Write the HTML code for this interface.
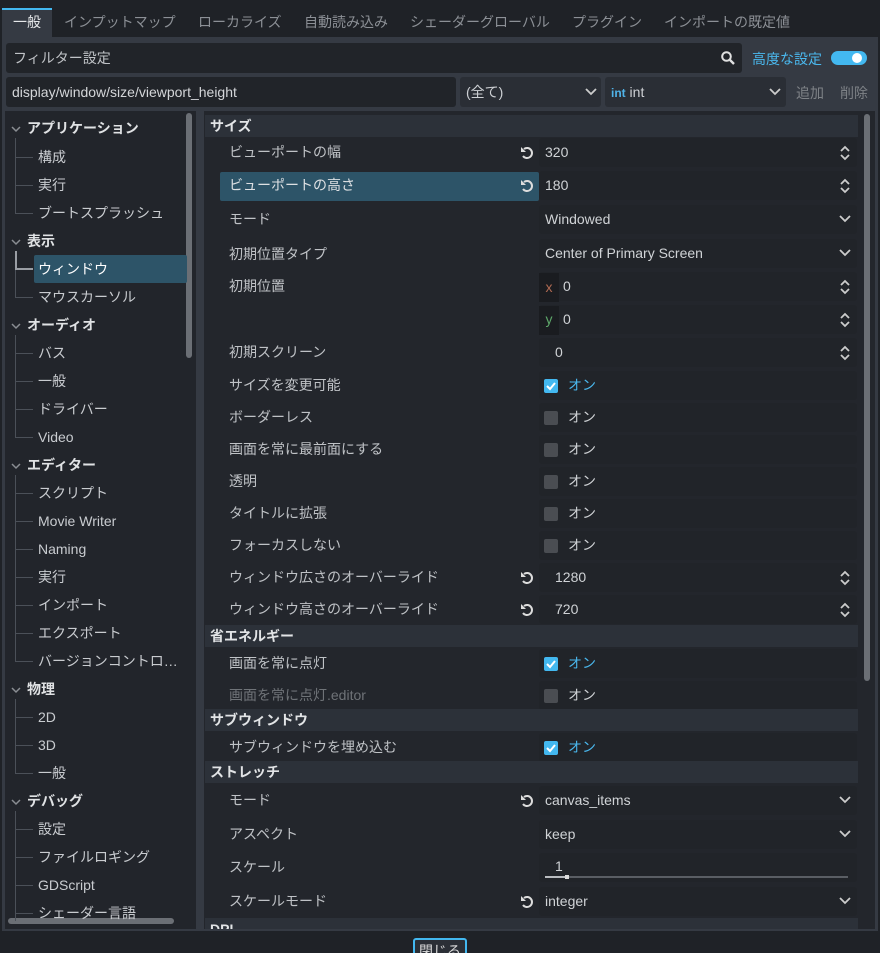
<!DOCTYPE html>
<html style="width:880px;height:953px;overflow:hidden"><head><meta charset="utf-8"><style>
*{margin:0;padding:0;box-sizing:border-box}
body{width:880px;height:953px;background:#1f2227;font-family:"Liberation Sans","Noto Sans CJK JP",sans-serif;font-size:14px;color:#cdd0d4;position:relative;overflow:hidden}
.a{position:absolute;white-space:nowrap}
.tab{position:absolute;top:10px;height:27px;line-height:25px;color:#8c9096;font-size:14px}
.f{position:absolute;background:#212429;border-radius:3px}
.lbl{position:absolute;left:229px;color:#bfc2c6;font-size:14px;line-height:20px}
.val{position:absolute;left:539px;width:318px;height:29px;background:#212429;border-radius:3px;line-height:29px;padding-left:6px;color:#d0d3d6}
.hdr{position:absolute;left:205px;width:653px;height:22px;background:#2c3139;font-weight:bold;padding-left:5px;line-height:22px;color:#e2e4e6;font-size:14px}
.ud{position:absolute;right:6px;top:7px}
.dd{position:absolute;right:6px;top:9px}
.cb{position:absolute;left:5px;top:8px;width:14px;height:14px;border-radius:2px;background:#4a4d52}
.cb.on{background:#43b8f0}
.on-t{position:absolute;left:29px;line-height:29px}
.tr{position:absolute;left:38px;font-size:14px;line-height:20px;color:#c9ccd0}
.th{position:absolute;left:27px;font-weight:bold;line-height:20px;color:#e0e2e4}
.car{position:absolute;left:11px}
.ln{position:absolute;left:15px;width:1px;background:#4b5058}
.hl{position:absolute;left:15px;width:18px;height:1px;background:#4b5058}
.rs{position:absolute;left:519px}
</style></head><body>
<div class="a" style="left:2px;top:8px;width:50px;height:29px;background:#353a43;border-top:2px solid #43b8f0"></div>
<div class="tab" style="left:13px;color:#e6e8ea">一般</div>
<div class="tab" style="left:64px">インプットマップ</div>
<div class="tab" style="left:198px">ローカライズ</div>
<div class="tab" style="left:304px">自動読み込み</div>
<div class="tab" style="left:410px">シェーダーグローバル</div>
<div class="tab" style="left:572px">プラグイン</div>
<div class="tab" style="left:664px">インポートの既定値</div>
<div class="a" style="left:2px;top:37px;width:876px;height:894px;background:#353a43"></div>
<div class="f" style="left:6px;top:43px;width:736px;height:30px;line-height:30px;padding-left:7px;color:#c0c3c7">フィルター設定</div>
<svg class="a" style="left:720px;top:50px" width="16" height="16"><circle cx="6.5" cy="6.5" r="4.3" fill="none" stroke="#e0e0e0" stroke-width="2"/><path d="M10 10l4 4" stroke="#e0e0e0" stroke-width="2.4"/></svg>
<div class="a" style="left:752px;top:49px;color:#4ab8ee;font-size:14px">高度な設定</div>
<div class="a" style="left:831px;top:51px;width:36px;height:14px;border-radius:7px;background:#43b8f0"></div>
<div class="a" style="left:852px;top:53px;width:10px;height:10px;border-radius:5px;background:#fff"></div>
<div class="f" style="left:6px;top:77px;width:450px;height:30px;line-height:30px;padding-left:6px;color:#d4d6d9">display/window/size/viewport_height</div>
<div class="f" style="left:460px;top:77px;width:141px;height:30px;line-height:30px;padding-left:6px;background:#2a2e35">(全て)</div>
<svg class="a" style="left:585px;top:87px" width="12" height="10"><path d="M1 2l5 5 5-5" fill="none" stroke="#ccc" stroke-width="1.8"/></svg>
<div class="f" style="left:605px;top:77px;width:181px;height:30px;line-height:30px;padding-left:6px;background:#2a2e35"><span style="color:#4fb3e8;font-weight:bold;font-size:12px">int</span> int</div>
<svg class="a" style="left:769px;top:87px" width="12" height="10"><path d="M1 2l5 5 5-5" fill="none" stroke="#ccc" stroke-width="1.8"/></svg>
<div class="a" style="left:796px;top:83px;color:#7e8287">追加</div>
<div class="a" style="left:840px;top:83px;color:#7e8287">削除</div>
<div class="a" style="left:5px;top:111px;width:191px;height:818px;background:#22252b"></div>
<div class="a" style="left:186px;top:113px;width:6px;height:245px;border-radius:3px;background:#6b6f75"></div>
<div class="a" style="left:8px;top:918px;width:166px;height:6px;border-radius:3px;background:#6b6f75"></div>
<div class="a" style="left:34px;top:255px;width:153px;height:28px;background:#2d5468;border-radius:2px"></div>
<svg class="car" style="top:125px" width="10" height="8"><path d="M1 2l4 4 4-4" fill="none" stroke="#8a8e93" stroke-width="1.5"/></svg><div class="th" style="top:118px">アプリケーション</div>
<div class="ln" style="top:138px;height:76px"></div>
<div class="hl" style="top:157px"></div><div class="tr" style="top:147px">構成</div>
<div class="hl" style="top:185px"></div><div class="tr" style="top:175px">実行</div>
<div class="hl" style="top:213px"></div><div class="tr" style="top:203px">ブートスプラッシュ</div>
<svg class="car" style="top:238px" width="10" height="8"><path d="M1 2l4 4 4-4" fill="none" stroke="#8a8e93" stroke-width="1.5"/></svg><div class="th" style="top:231px">表示</div>
<div class="ln" style="top:251px;height:47px"></div>
<div class="a" style="left:15px;top:251px;width:2px;height:18px;background:#9a9ea4"></div>
<div class="a" style="left:15px;top:268px;width:18px;height:2px;background:#9a9ea4"></div>
<div class="tr" style="top:259px;color:#fff">ウィンドウ</div>
<div class="hl" style="top:297px"></div><div class="tr" style="top:287px">マウスカーソル</div>
<svg class="car" style="top:322px" width="10" height="8"><path d="M1 2l4 4 4-4" fill="none" stroke="#8a8e93" stroke-width="1.5"/></svg><div class="th" style="top:315px">オーディオ</div>
<div class="ln" style="top:335px;height:103px"></div>
<div class="hl" style="top:353px"></div><div class="tr" style="top:343px">バス</div>
<div class="hl" style="top:381px"></div><div class="tr" style="top:371px">一般</div>
<div class="hl" style="top:409px"></div><div class="tr" style="top:399px">ドライバー</div>
<div class="hl" style="top:437px"></div><div class="tr" style="top:427px">Video</div>
<svg class="car" style="top:462px" width="10" height="8"><path d="M1 2l4 4 4-4" fill="none" stroke="#8a8e93" stroke-width="1.5"/></svg><div class="th" style="top:455px">エディター</div>
<div class="ln" style="top:475px;height:187px"></div>
<div class="hl" style="top:493px"></div><div class="tr" style="top:483px">スクリプト</div>
<div class="hl" style="top:521px"></div><div class="tr" style="top:511px">Movie Writer</div>
<div class="hl" style="top:549px"></div><div class="tr" style="top:539px">Naming</div>
<div class="hl" style="top:577px"></div><div class="tr" style="top:567px">実行</div>
<div class="hl" style="top:605px"></div><div class="tr" style="top:595px">インポート</div>
<div class="hl" style="top:633px"></div><div class="tr" style="top:623px">エクスポート</div>
<div class="hl" style="top:661px"></div><div class="tr" style="top:651px">バージョンコントロ…</div>
<svg class="car" style="top:686px" width="10" height="8"><path d="M1 2l4 4 4-4" fill="none" stroke="#8a8e93" stroke-width="1.5"/></svg><div class="th" style="top:679px">物理</div>
<div class="ln" style="top:699px;height:75px"></div>
<div class="hl" style="top:717px"></div><div class="tr" style="top:707px">2D</div>
<div class="hl" style="top:745px"></div><div class="tr" style="top:735px">3D</div>
<div class="hl" style="top:773px"></div><div class="tr" style="top:763px">一般</div>
<svg class="car" style="top:798px" width="10" height="8"><path d="M1 2l4 4 4-4" fill="none" stroke="#8a8e93" stroke-width="1.5"/></svg><div class="th" style="top:791px">デバッグ</div>
<div class="ln" style="top:811px;height:110px"></div>
<div class="hl" style="top:829px"></div><div class="tr" style="top:819px">設定</div>
<div class="hl" style="top:857px"></div><div class="tr" style="top:847px">ファイルロギング</div>
<div class="hl" style="top:885px"></div><div class="tr" style="top:875px">GDScript</div>
<div class="hl" style="top:913px"></div><div class="tr" style="top:903px">シェーダー言語</div>
<div class="a" style="left:204px;top:111px;width:671px;height:818px;background:#23262c"></div>
<div class="a" style="left:864px;top:114px;width:6px;height:567px;border-radius:3px;background:#6b6f75"></div>
<div class="a" style="left:220px;top:172px;width:319px;height:29px;background:#2d5468;border-radius:2px"></div>

<div class="hdr" style="top:115px">サイズ</div>
<div class="lbl" style="top:142px">ビューポートの幅</div>
<svg class="a rs" style="top:145px" width="16" height="16"><path d="M5 4a5 5 0 1 1-1 7" fill="none" stroke="#ddd" stroke-width="2"/><path d="M2 2v5h5z" fill="#ddd"/></svg>
<div class="val" style="top:138px">320<svg class="ud" width="12" height="16"><path d="M2 6l4-4 4 4M2 10l4 4 4-4" fill="none" stroke="#ccc" stroke-width="1.8"/></svg></div>
<div class="lbl" style="top:175px;color:#dde0e3">ビューポートの高さ</div>
<svg class="a rs" style="top:178px" width="16" height="16"><path d="M5 4a5 5 0 1 1-1 7" fill="none" stroke="#ddd" stroke-width="2"/><path d="M2 2v5h5z" fill="#ddd"/></svg>
<div class="val" style="top:171px">180<svg class="ud" width="12" height="16"><path d="M2 6l4-4 4 4M2 10l4 4 4-4" fill="none" stroke="#ccc" stroke-width="1.8"/></svg></div>
<div class="lbl" style="top:209px">モード</div>
<div class="val" style="top:205px">Windowed<svg class="dd" width="12" height="10"><path d="M1 2l5 5 5-5" fill="none" stroke="#ccc" stroke-width="1.8"/></svg></div>
<div class="lbl" style="top:244px">初期位置タイプ</div>
<div class="val" style="top:239px">Center of Primary Screen<svg class="dd" width="12" height="10"><path d="M1 2l5 5 5-5" fill="none" stroke="#ccc" stroke-width="1.8"/></svg></div>
<div class="lbl" style="top:276px">初期位置</div>
<div class="val" style="top:272px;padding-left:24px">0<svg class="ud" width="12" height="16"><path d="M2 6l4-4 4 4M2 10l4 4 4-4" fill="none" stroke="#ccc" stroke-width="1.8"/></svg></div>
<div class="a" style="left:539px;top:273px;width:20px;height:29px;background:#1a1c20;color:#b06a52;text-align:center;line-height:28px">x</div>
<div class="val" style="top:305px;padding-left:24px">0<svg class="ud" width="12" height="16"><path d="M2 6l4-4 4 4M2 10l4 4 4-4" fill="none" stroke="#ccc" stroke-width="1.8"/></svg></div>
<div class="a" style="left:539px;top:306px;width:20px;height:29px;background:#1a1c20;color:#5ea86a;text-align:center;line-height:26px">y</div>
<div class="lbl" style="top:342px">初期スクリーン</div>
<div class="val" style="top:338px;padding-left:16px">0<svg class="ud" width="12" height="16"><path d="M2 6l4-4 4 4M2 10l4 4 4-4" fill="none" stroke="#ccc" stroke-width="1.8"/></svg></div>

<div class="lbl" style="top:375px">サイズを変更可能</div>
<div class="val" style="top:371px"><div class="cb on"></div><svg class="a" style="left:7px;top:10px" width="10" height="10"><path d="M1 5l3 3 5-6" fill="none" stroke="#fff" stroke-width="2"/></svg><span class="on-t" style="color:#4ab8ee">オン</span></div>
<div class="lbl" style="top:407px">ボーダーレス</div>
<div class="val" style="top:403px"><div class="cb"></div><span class="on-t">オン</span></div>
<div class="lbl" style="top:439px">画面を常に最前面にする</div>
<div class="val" style="top:435px"><div class="cb"></div><span class="on-t">オン</span></div>
<div class="lbl" style="top:471px">透明</div>
<div class="val" style="top:467px"><div class="cb"></div><span class="on-t">オン</span></div>
<div class="lbl" style="top:503px">タイトルに拡張</div>
<div class="val" style="top:499px"><div class="cb"></div><span class="on-t">オン</span></div>
<div class="lbl" style="top:535px">フォーカスしない</div>
<div class="val" style="top:531px"><div class="cb"></div><span class="on-t">オン</span></div>
<div class="lbl" style="top:567px">ウィンドウ広さのオーバーライド</div>
<svg class="a rs" style="top:570px" width="16" height="16"><path d="M5 4a5 5 0 1 1-1 7" fill="none" stroke="#ddd" stroke-width="2"/><path d="M2 2v5h5z" fill="#ddd"/></svg>
<div class="val" style="top:563px;padding-left:16px">1280<svg class="ud" width="12" height="16"><path d="M2 6l4-4 4 4M2 10l4 4 4-4" fill="none" stroke="#ccc" stroke-width="1.8"/></svg></div>
<div class="lbl" style="top:599px">ウィンドウ高さのオーバーライド</div>
<svg class="a rs" style="top:602px" width="16" height="16"><path d="M5 4a5 5 0 1 1-1 7" fill="none" stroke="#ddd" stroke-width="2"/><path d="M2 2v5h5z" fill="#ddd"/></svg>
<div class="val" style="top:595px;padding-left:16px">720<svg class="ud" width="12" height="16"><path d="M2 6l4-4 4 4M2 10l4 4 4-4" fill="none" stroke="#ccc" stroke-width="1.8"/></svg></div>

<div class="hdr" style="top:625px">省エネルギー</div>
<div class="lbl" style="top:653px">画面を常に点灯</div>
<div class="val" style="top:649px"><div class="cb on"></div><svg class="a" style="left:7px;top:10px" width="10" height="10"><path d="M1 5l3 3 5-6" fill="none" stroke="#fff" stroke-width="2"/></svg><span class="on-t" style="color:#4ab8ee">オン</span></div>
<div class="lbl" style="top:685px;color:#6f7378">画面を常に点灯.editor</div>
<div class="val" style="top:681px"><div class="cb"></div><span class="on-t">オン</span></div>
<div class="hdr" style="top:709px">サブウィンドウ</div>
<div class="lbl" style="top:737px">サブウィンドウを埋め込む</div>
<div class="val" style="top:733px"><div class="cb on"></div><svg class="a" style="left:7px;top:10px" width="10" height="10"><path d="M1 5l3 3 5-6" fill="none" stroke="#fff" stroke-width="2"/></svg><span class="on-t" style="color:#4ab8ee">オン</span></div>
<div class="hdr" style="top:761px">ストレッチ</div>
<div class="lbl" style="top:790px">モード</div>
<svg class="a rs" style="top:793px" width="16" height="16"><path d="M5 4a5 5 0 1 1-1 7" fill="none" stroke="#ddd" stroke-width="2"/><path d="M2 2v5h5z" fill="#ddd"/></svg>
<div class="val" style="top:786px">canvas_items<svg class="dd" width="12" height="10"><path d="M1 2l5 5 5-5" fill="none" stroke="#ccc" stroke-width="1.8"/></svg></div>
<div class="lbl" style="top:824px">アスペクト</div>
<div class="val" style="top:820px">keep<svg class="dd" width="12" height="10"><path d="M1 2l5 5 5-5" fill="none" stroke="#ccc" stroke-width="1.8"/></svg></div>
<div class="lbl" style="top:857px">スケール</div>
<div class="val" style="top:853px;line-height:26px;padding-left:16px">1<div class="a" style="left:6px;top:23px;width:303px;height:2px;background:#5a5e64"></div><div class="a" style="left:6px;top:23px;width:22px;height:2px;background:#b9bcc0"></div><div class="a" style="left:26px;top:22px;width:4px;height:4px;background:#ddd"></div></div>
<div class="lbl" style="top:891px">スケールモード</div>
<svg class="a rs" style="top:894px" width="16" height="16"><path d="M5 4a5 5 0 1 1-1 7" fill="none" stroke="#ddd" stroke-width="2"/><path d="M2 2v5h5z" fill="#ddd"/></svg>
<div class="val" style="top:887px">integer<svg class="dd" width="12" height="10"><path d="M1 2l5 5 5-5" fill="none" stroke="#ccc" stroke-width="1.8"/></svg></div>
<div class="a" style="left:205px;top:918px;width:653px;height:11px;background:#2c3139;overflow:hidden;font-weight:bold;padding-left:5px;line-height:22px;color:#e2e4e6">DPI</div>
<div class="a" style="left:2px;top:929px;width:876px;height:2px;background:#353a43"></div>
<div class="a" style="left:0;top:938px;width:880px;height:15px;overflow:hidden">
<div class="a" style="left:413px;top:0;width:54px;height:24px;border:2px solid #43b8f0;border-radius:3px;background:#2b2f36;text-align:center;line-height:22px;color:#ddd">閉じる</div>
</div>
</body></html>
